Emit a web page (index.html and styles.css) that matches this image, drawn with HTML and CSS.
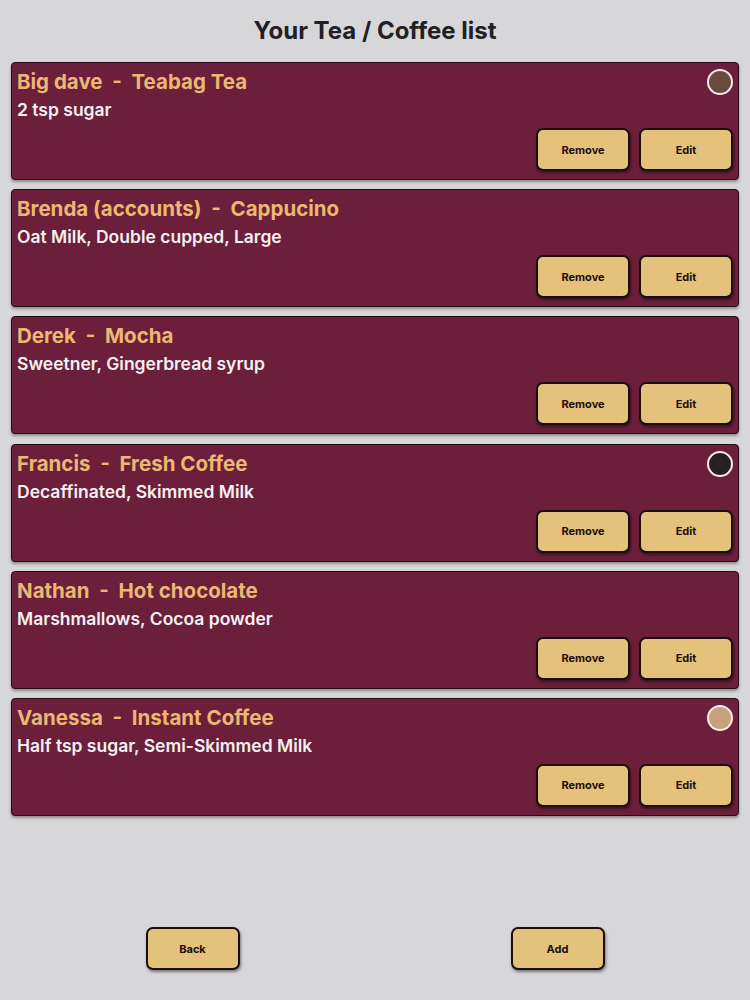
FILE: index.html
```html
<!DOCTYPE html>
<html lang="en">
<head>
  <meta charset="UTF-8">
  <title>Your Tea / Coffee list</title>
  <meta name="viewport" content="width=device-width, initial-scale=1.0">
  <link rel="stylesheet" href="styles.css">
</head>
<body>
  <h1 class="page-title">Your Tea / Coffee list</h1>

  <div class="order-list">
    <div class="order-card">
      <div class="order-head">
        <span class="order-name">Big dave&nbsp; -&nbsp; Teabag Tea</span>
        <span class="swatch swatch-brown"></span>
      </div>
      <div class="order-notes">2 tsp sugar</div>
      <div class="order-actions">
        <button class="pill-button">Remove</button>
        <button class="pill-button">Edit</button>
      </div>
    </div>

    <div class="order-card">
      <div class="order-head">
        <span class="order-name">Brenda (accounts)&nbsp; -&nbsp; Cappucino</span>
      </div>
      <div class="order-notes">Oat Milk, Double cupped, Large</div>
      <div class="order-actions">
        <button class="pill-button">Remove</button>
        <button class="pill-button">Edit</button>
      </div>
    </div>

    <div class="order-card">
      <div class="order-head">
        <span class="order-name">Derek&nbsp; -&nbsp; Mocha</span>
      </div>
      <div class="order-notes">Sweetner, Gingerbread syrup</div>
      <div class="order-actions">
        <button class="pill-button">Remove</button>
        <button class="pill-button">Edit</button>
      </div>
    </div>

    <div class="order-card">
      <div class="order-head">
        <span class="order-name">Francis&nbsp; -&nbsp; Fresh Coffee</span>
        <span class="swatch swatch-black"></span>
      </div>
      <div class="order-notes">Decaffinated, Skimmed Milk</div>
      <div class="order-actions">
        <button class="pill-button">Remove</button>
        <button class="pill-button">Edit</button>
      </div>
    </div>

    <div class="order-card">
      <div class="order-head">
        <span class="order-name">Nathan&nbsp; -&nbsp; Hot chocolate</span>
      </div>
      <div class="order-notes">Marshmallows, Cocoa powder</div>
      <div class="order-actions">
        <button class="pill-button">Remove</button>
        <button class="pill-button">Edit</button>
      </div>
    </div>

    <div class="order-card">
      <div class="order-head">
        <span class="order-name">Vanessa&nbsp; -&nbsp; Instant Coffee</span>
        <span class="swatch swatch-tan"></span>
      </div>
      <div class="order-notes">Half tsp sugar, Semi-Skimmed Milk</div>
      <div class="order-actions">
        <button class="pill-button">Remove</button>
        <button class="pill-button">Edit</button>
      </div>
    </div>
  </div>

  <div class="footer-bar">
    <button class="pill-button">Back</button>
    <button class="pill-button">Add</button>
  </div>
</body>
</html>
```

FILE: styles.css
```css
* {
  box-sizing: border-box;
}
body {
  font-family: Inter, "Noto Sans", Arial, sans-serif;
  background-color: #d7d6d8;
  margin: 0;
  padding: 0;
  width: 750px;
  height: 1000px;
  display: flex;
  flex-direction: column;
  overflow: hidden;
}
.page-title {
  margin: 0;
  padding-top: 16px;
  height: 57px;
  text-align: center;
  font-size: 24px;
  line-height: 30px;
  font-weight: 700;
  color: #222024;
}
.order-list {
  display: flex;
  flex-direction: column;
  gap: 9.2px;
  padding: 5px 11px 0 11px;
}
.order-card {
  background-color: #6b1f3a;
  border: 1px solid #2a0c16;
  border-radius: 4px;
  box-shadow: 0 2px 3px rgba(0, 0, 0, 0.35);
  padding: 7px 5px 9px 5px;
  height: 118px;
}
.order-head {
  display: flex;
  justify-content: space-between;
  align-items: center;
  height: 24px;
}
.order-name {
  color: #eab872;
  font-size: 20.5px;
  font-weight: 700;
  line-height: 24px;
}
.swatch {
  width: 26px;
  height: 26px;
  border-radius: 50%;
  border: 2px solid #f4ecec;
  margin-right: 0;
}
.swatch-brown {
  background-color: #6b4a3e;
}
.swatch-black {
  background-color: #262024;
}
.swatch-tan {
  background-color: #c9a07c;
}
.order-notes {
  margin-top: 5px;
  color: #f6f0f2;
  font-size: 17.5px;
  font-weight: 600;
  line-height: 22px;
}
.order-actions {
  display: flex;
  justify-content: flex-end;
  gap: 9px;
  margin-top: 7px;
}
.pill-button {
  width: 94px;
  height: 43px;
  background-color: #e5c27b;
  border: 2px solid #1d0e0c;
  border-radius: 7px;
  box-shadow: 1px 2px 3px rgba(0, 0, 0, 0.45);
  font-family: Inter, "Noto Sans", Arial, sans-serif;
  font-size: 11px;
  font-weight: 700;
  color: #1d0e0c;
  cursor: pointer;
}
.footer-bar {
  display: flex;
  justify-content: space-around;
  padding: 0 10px;
  margin-top: auto;
  margin-bottom: 30px;
}
```
